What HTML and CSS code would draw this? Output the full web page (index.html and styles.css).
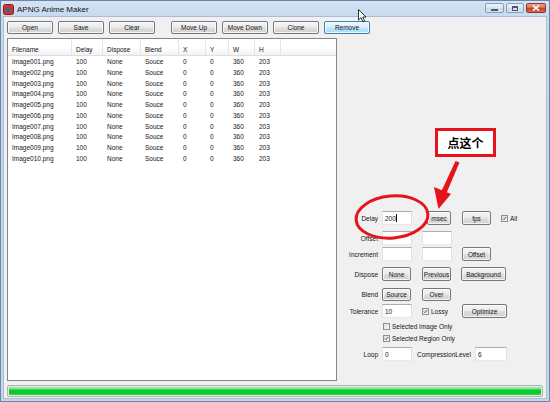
FILE: index.html
```html
<!DOCTYPE html>
<html>
<head>
<meta charset="utf-8">
<title>APNG Anime Maker</title>
<link rel="stylesheet" href="styles.css">
</head>
<body>
<div class="window">
  <div class="titlebar">
    <svg class="appicon" width="11" height="11" viewBox="0 0 11 11">
      <rect x="0.5" y="0.5" width="10" height="10" rx="2" fill="#d8332b" stroke="#8a1a14"/>
      <rect x="3" y="3" width="5" height="5" rx="1" fill="#4b5f8e"/>
    </svg>
    <span class="title">APNG Anime Maker</span>
    <div class="caps">
      <div class="cap cap-min"><span class="g-min"></span></div>
      <div class="cap cap-max"><span class="g-max"></span></div>
      <div class="cap cap-close">
        <svg width="8" height="6" viewBox="0 0 8 6"><path d="M1 0.5 L7 5.5 M7 0.5 L1 5.5" stroke="#fff" stroke-width="1.6"/></svg>
      </div>
    </div>
  </div>

  <div class="client">
    <div class="toolbar">
      <div class="btn tb">Open</div>
      <div class="btn tb">Save</div>
      <div class="btn tb">Clear</div>
      <div class="btn tb tb-sep">Move Up</div>
      <div class="btn tb">Move Down</div>
      <div class="btn tb">Clone</div>
      <div class="btn tb hot">Remove</div>
    </div>

    <div class="main">
      <div class="list">
        <div class="lhead">
          <div class="hc">Filename</div><div class="hc">Delay</div><div class="hc">Dispose</div><div class="hc">Blend</div><div class="hc">X</div><div class="hc">Y</div><div class="hc">W</div><div class="hc">H</div>
        </div>
        <div class="rows">
          <div class="lrow"><span>Image001.png</span><span>100</span><span>None</span><span>Souce</span><span>0</span><span>0</span><span>360</span><span>203</span></div>
          <div class="lrow"><span>Image002.png</span><span>100</span><span>None</span><span>Souce</span><span>0</span><span>0</span><span>360</span><span>203</span></div>
          <div class="lrow"><span>Image003.png</span><span>100</span><span>None</span><span>Souce</span><span>0</span><span>0</span><span>360</span><span>203</span></div>
          <div class="lrow"><span>Image004.png</span><span>100</span><span>None</span><span>Souce</span><span>0</span><span>0</span><span>360</span><span>203</span></div>
          <div class="lrow"><span>Image005.png</span><span>100</span><span>None</span><span>Souce</span><span>0</span><span>0</span><span>360</span><span>203</span></div>
          <div class="lrow"><span>Image006.png</span><span>100</span><span>None</span><span>Souce</span><span>0</span><span>0</span><span>360</span><span>203</span></div>
          <div class="lrow"><span>Image007.png</span><span>100</span><span>None</span><span>Souce</span><span>0</span><span>0</span><span>360</span><span>203</span></div>
          <div class="lrow"><span>Image008.png</span><span>100</span><span>None</span><span>Souce</span><span>0</span><span>0</span><span>360</span><span>203</span></div>
          <div class="lrow"><span>Image009.png</span><span>100</span><span>None</span><span>Souce</span><span>0</span><span>0</span><span>360</span><span>203</span></div>
          <div class="lrow"><span>Image010.png</span><span>100</span><span>None</span><span>Souce</span><span>0</span><span>0</span><span>360</span><span>203</span></div>
        </div>
      </div>

      <div class="panel">
        <div class="row r-delay">
          <div class="lbl">Delay</div>
          <div class="in">200<span class="caret"></span></div>
          <div class="btn b-msec">msec</div>
          <div class="btn b-fps">fps</div>
          <div class="cb on cb-all"><svg viewBox="0 0 7 7"><path d="M1.3 3.6 L2.8 5.2 L5.8 1.4" fill="none" stroke="#2b4b8c" stroke-width="1.3"/></svg></div>
          <span class="cbl">All</span>
        </div>
        <div class="row r-offset">
          <div class="lbl">Offset</div>
          <div class="in"></div>
          <div class="in in2"></div>
        </div>
        <div class="row r-inc">
          <div class="lbl">Increment</div>
          <div class="in"></div>
          <div class="in in2"></div>
          <div class="btn b-c4">Offset</div>
        </div>
        <div class="row r-disp">
          <div class="lbl">Dispose</div>
          <div class="btn b-c2">None</div>
          <div class="btn b-c3">Previous</div>
          <div class="btn b-c4 wide">Background</div>
        </div>
        <div class="row r-blend">
          <div class="lbl">Blend</div>
          <div class="btn b-c2">Source</div>
          <div class="btn b-c3">Over</div>
        </div>
        <div class="row r-tol">
          <div class="lbl">Tolerance</div>
          <div class="in">10</div>
          <div class="cb on cb-lossy"><svg viewBox="0 0 7 7"><path d="M1.3 3.6 L2.8 5.2 L5.8 1.4" fill="none" stroke="#2b4b8c" stroke-width="1.3"/></svg></div>
          <span class="cbl">Lossy</span>
          <div class="btn b-opt wide">Optimize</div>
        </div>
        <div class="row r-sel1">
          <div class="cb cb-sel"></div>
          <span class="cbl">Selected Image Only</span>
        </div>
        <div class="row r-sel2">
          <div class="cb on cb-sel"><svg viewBox="0 0 7 7"><path d="M1.3 3.6 L2.8 5.2 L5.8 1.4" fill="none" stroke="#2b4b8c" stroke-width="1.3"/></svg></div>
          <span class="cbl">Selected Region Only</span>
        </div>
        <div class="row r-loop">
          <div class="lbl">Loop</div>
          <div class="in">0</div>
          <span class="clabel">CompressionLevel</span>
          <div class="in in-comp">6</div>
        </div>
      </div>
    </div>

    <div class="progress"><div class="fill"></div></div>
  </div>

  <div class="note">点这个</div>
  <svg class="marks" width="550" height="402" viewBox="0 0 550 402">
    <ellipse cx="392" cy="217" rx="36" ry="21" transform="rotate(-5 392 217)" fill="none" stroke="#e5141b" stroke-width="3"/>
    <polygon points="455.5,161 459.5,162.5 446.5,193 441.5,191" fill="#e5141b"/>
    <polygon points="434,187 451,194 438.5,209" fill="#e5141b"/>
  </svg>
  <svg class="cursor" width="10" height="14" viewBox="0 0 10 14">
    <path d="M0.5 0.5 L0.5 11 L3 8.6 L5 12.8 L6.6 12 L4.7 8 L8 8 Z" fill="#fff" stroke="#000" stroke-width="0.8" stroke-linejoin="round"/>
  </svg>
</div>
</body>
</html>
```

FILE: styles.css
```css
* { box-sizing: border-box; }
html, body { margin: 0; padding: 0; }
body {
  width: 550px;
  height: 402px;
  overflow: hidden;
  font-family: "Liberation Sans", Arial, sans-serif;
  font-size: 6.5px;
  color: #151515;
  background: #fff;
}

.window {
  position: relative;
  width: 550px;
  height: 402px;
  display: flex;
  flex-direction: column;
  background: linear-gradient(#d4e3f4 0px, #c6d9ee 16px, #c3d6ec 100%);
  border: 1px solid #6f86a3;
}

/* title bar */
.titlebar {
  height: 16px;
  display: flex;
  align-items: center;
  padding-left: 2px;
}
.appicon { display: block; }
.title {
  margin-left: 3px;
  font-size: 8px;
  color: #111;
}
.caps {
  margin-left: auto;
  margin-right: 3px;
  align-self: flex-start;
  margin-top: 2px;
  display: flex;
  gap: 2px;
}
.cap {
  height: 10px;
  border: 1px solid #8a9cb5;
  border-radius: 2px;
  display: flex;
  align-items: center;
  justify-content: center;
  background: linear-gradient(#edf3fa, #dbe6f3 50%, #cbdaec 51%, #d6e2f1);
}
.cap-min { width: 19px; }
.cap-max { width: 18px; }
.cap-close {
  width: 20px;
  border-color: #8b3a2c;
  background: linear-gradient(#e9a898, #d76548 50%, #c9401f 51%, #d8664a);
}
.g-min { width: 7px; height: 2px; background: #4a5870; margin-top: 3px; }
.g-max { width: 6px; height: 5px; border: 1px solid #4a5870; border-top-width: 2px; }
.cap-close svg { display: block; }

/* client */
.client {
  flex: 1;
  margin: 0 3px 3px 3px;
  background: #f0f0f0;
  box-shadow: 0 0 0 1px #a9bdd6;
  display: flex;
  flex-direction: column;
  padding: 4px 3px 1px 3px;
}

.toolbar {
  display: flex;
  gap: 5px;
  height: 13px;
}

.btn {
  display: flex;
  align-items: center;
  justify-content: center;
  height: 14px;
  border: 1px solid #767676;
  border-radius: 2px;
  background: linear-gradient(#f4f4f4 0%, #ececec 48%, #dedede 52%, #d1d1d1 100%);
  box-shadow: inset 0 0 0 1px rgba(255,255,255,0.75);
  color: #151515;
  white-space: nowrap;
}
.tb { width: 46px; height: 13px; }
.tb-sep { margin-left: 11px; }
.hot {
  border-color: #3c7fb1;
  background: linear-gradient(#eaf6fd 0%, #d9f0fc 48%, #bee6fd 52%, #a9dbf6 100%);
}

.main {
  flex: 1;
  display: flex;
  margin-top: 4px;
}

/* list view */
.list {
  width: 330px;
  border: 1px solid #82878f;
  background: #fff;
}
.lhead, .lrow {
  display: grid;
  grid-template-columns: 64px 31px 38px 38px 27px 23px 26px 26px;
}
.lhead {
  height: 17px;
  background: linear-gradient(#ffffff 0%, #ffffff 55%, #f1f2f4 100%);
  border-bottom: 1px solid #dcdfe4;
}
.hc {
  padding-left: 4px;
  padding-top: 5px;
  border-right: 1px solid #e4e6ea;
  display: flex;
  align-items: center;
}
.rows { padding-top: 1px; }
.lrow {
  height: 10.75px;
  line-height: 10.75px;
}
.lrow span {
  padding-left: 4px;
  white-space: nowrap;
  overflow: hidden;
}

/* right panel */
.panel {
  flex: 1;
  display: flex;
  flex-direction: column;
  padding-top: 173px;
}
.row {
  display: flex;
  align-items: center;
  height: 14px;
}
.lbl {
  width: 41px;
  text-align: right;
  margin-right: 4px;
}
.in {
  width: 30px;
  height: 14px;
  background: #fff;
  border: 1px solid;
  border-color: #abadb3 #dbdfe6 #e3e9ef #e2e3ea;
  display: flex;
  align-items: center;
  padding-left: 2px;
}
.in2 { margin-left: 10px; }
.caret { width: 1px; height: 8px; background: #000; margin-left: 0.5px; }

.b-msec { margin-left: 15px; width: 24px; }
.b-fps { margin-left: 11px; width: 29px; }
.b-c2 { width: 29px; }
.b-c3 { margin-left: 11px; width: 29px; }
.b-c4 { margin-left: 10px; width: 29px; }
.wide { width: 45px; }
.b-opt { margin-left: 14px; }

.cb {
  width: 7px;
  height: 7px;
  border: 1px solid #8e8f8f;
  background: linear-gradient(135deg, #dcdcdc, #fbfbfb);
  display: flex;
}
.cb svg { width: 100%; height: 100%; display: block; }
.cbl { margin-left: 2px; white-space: nowrap; }
.cb-all { margin-left: 10px; }
.cb-lossy { margin-left: 10px; }
.cb-sel { margin-left: 46px; }

.r-offset { margin-top: 6px; }
.r-inc { margin-top: 2px; }
.r-disp { margin-top: 6px; }
.r-blend { margin-top: 6px; }
.r-blend .btn { height: 13px; }
.r-tol { margin-top: 3px; }
.r-sel1 { margin-top: 3px; height: 11px; }
.r-sel2 { margin-top: 1px; height: 11px; }
.r-loop { margin-top: 3px; }
.clabel { margin-left: 5px; width: 58px; white-space: nowrap; }
.in-comp { width: 32px; }

/* progress */
.progress {
  margin-top: 4px;
  height: 12px;
  border: 1px solid #b2b2b2;
  border-radius: 2px;
  background: #e6e6e6;
  padding: 1px;
}
.fill {
  height: 100%;
  border-radius: 1px;
  background: linear-gradient(#a8edb3 0%, #7fe290 22%, #0ccf2e 38%, #06c928 75%, #35d64f 100%);
}

/* annotation overlays */
.note {
  position: absolute;
  left: 434px;
  top: 127px;
  width: 61px;
  height: 29px;
  border: 3px solid #e5141b;
  background: #fff;
  display: flex;
  align-items: center;
  justify-content: center;
  font-family: "Noto Sans CJK SC", "Noto Sans", sans-serif;
  font-weight: bold;
  font-size: 12px;
  color: #000;
}
.marks {
  position: absolute;
  left: -1px;
  top: -1px;
  pointer-events: none;
}
.cursor {
  position: absolute;
  left: 357px;
  top: 8px;
}
```
